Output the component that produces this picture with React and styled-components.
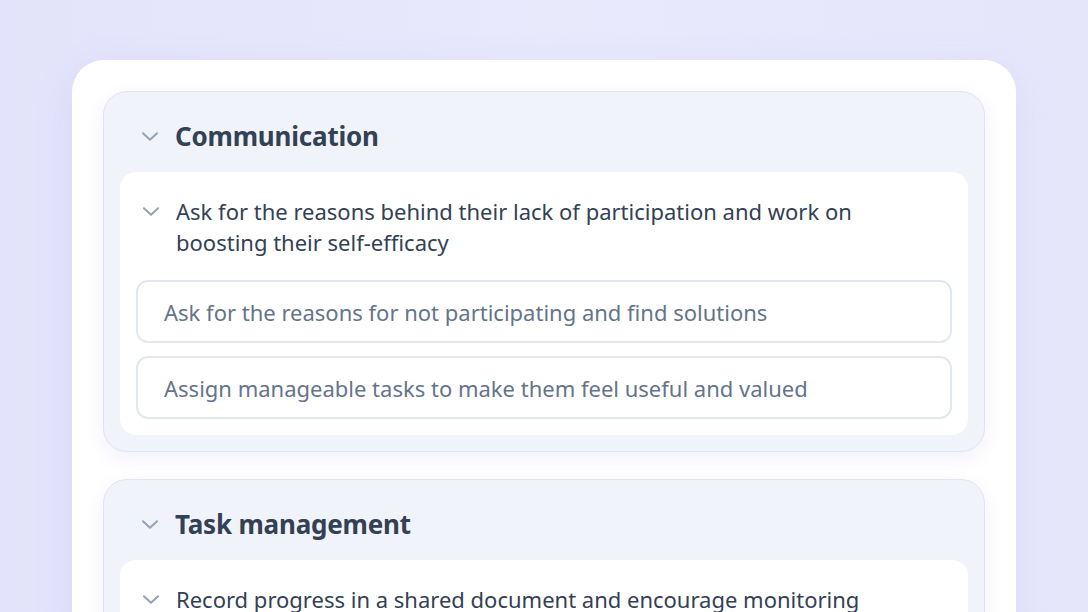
import React from 'react';
import styled, { createGlobalStyle } from 'styled-components';

const GlobalStyle = createGlobalStyle`
  html, body {
    margin: 0;
    padding: 0;
    height: 100%;
    overflow: hidden;
  }
  body {
    font-family: "Noto Sans", "Open Sans", sans-serif;
    background: linear-gradient(90deg, #e3e3fb 0%, #e9e9fc 50%, #e6e6fb 100%);
  }
`;

const sections = [
  {
    title: 'Communication',
    items: [
      {
        text: 'Ask for the reasons behind their lack of participation and work on boosting their self-efficacy',
        options: [
          'Ask for the reasons for not participating and find solutions',
          'Assign manageable tasks to make them feel useful and valued',
        ],
      },
    ],
  },
  {
    title: 'Task management',
    items: [
      {
        text: 'Record progress in a shared document and encourage monitoring',
        options: ['Set clear weekly goals for each member', 'Review progress together at the end of each week'],
      },
    ],
  },
];

const Chevron = () => (
  <ChevronSvg width="26" height="26" viewBox="0 0 24 24" fill="none">
    <path d="M5.5 9.5l6.5 6 6.5-6" stroke="currentColor" strokeWidth="1.9" strokeLinecap="round" strokeLinejoin="round" />
  </ChevronSvg>
);

const App = () => {
  return (
    <Page>
      <GlobalStyle />
      <Card>
        {sections.map((section) => (
          <Section key={section.title}>
            <SectionHeader>
              <Chevron />
              <SectionTitle>{section.title}</SectionTitle>
            </SectionHeader>
            {section.items.map((item) => (
              <Item key={item.text}>
                <ItemHeader>
                  <Chevron />
                  <ItemText>{item.text}</ItemText>
                </ItemHeader>
                <Options>
                  {item.options.map((opt) => (
                    <Option key={opt}>{opt}</Option>
                  ))}
                </Options>
              </Item>
            ))}
          </Section>
        ))}
      </Card>
    </Page>
  );
};

const Page = styled.div`
  height: 612px;
  padding: 60px 72px 0;
  box-sizing: border-box;
  overflow: hidden;
`;

const Card = styled.div`
  background: #ffffff;
  border-radius: 32px;
  padding: 31px 31px 40px;
  display: flex;
  flex-direction: column;
  gap: 27px;
  box-shadow: 0 10px 40px rgba(120, 120, 220, 0.12);
`;

const Section = styled.section`
  background: #f0f3f9;
  border: 1px solid #e2e2f5;
  border-radius: 24px;
  padding: 0 16px 16px;
  box-shadow: 0 6px 18px rgba(130, 130, 230, 0.12);
`;

const ChevronSvg = styled.svg`
  color: #94a3b8;
  flex-shrink: 0;
`;

const SectionHeader = styled.div`
  display: flex;
  align-items: center;
  gap: 12px;
  height: 80px;
  padding: 8px 0 0 17px;
  box-sizing: border-box;
`;

const SectionTitle = styled.h2`
  margin: 0;
  font-size: 26px;
  font-weight: 700;
  color: #334155;
  letter-spacing: -0.2px;
`;

const Item = styled.div`
  background: #ffffff;
  border-radius: 16px;
  padding: 24px 16px 16px;
`;

const ItemHeader = styled.div`
  display: flex;
  align-items: flex-start;
  gap: 12px;
  padding-left: 2px;
  margin-bottom: 22px;

  & > svg {
    margin-top: 2px;
  }
`;

const ItemText = styled.p`
  margin: 0;
  font-size: 22px;
  line-height: 31px;
  color: #334155;
  max-width: 700px;
`;

const Options = styled.div`
  display: flex;
  flex-direction: column;
  gap: 13px;
`;

const Option = styled.div`
  border: 2px solid #e2e8f0;
  border-radius: 12px;
  height: 63px;
  box-sizing: border-box;
  display: flex;
  align-items: center;
  padding: 0 26px;
  font-size: 22px;
  color: #64748b;
`;

export default App;
